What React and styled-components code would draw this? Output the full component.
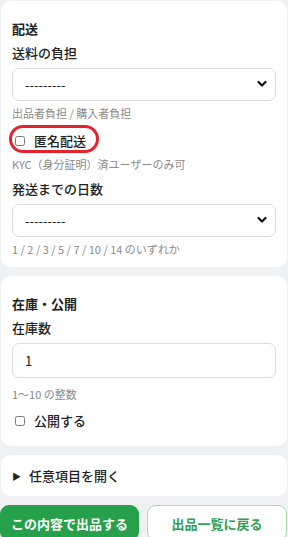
import React from 'react'
import styled, { createGlobalStyle } from 'styled-components'

const GlobalStyle = createGlobalStyle`
  html, body {
    margin: 0;
    padding: 0;
    background: #f0f1f3;
    font-family: "Noto Sans CJK JP", "Noto Sans", sans-serif;
    color: #222;
  }
`

const Page = styled.div`
  display: flex;
  flex-direction: column;
  gap: 9px;
  padding: 1px 1px 0 1px;
`

const Card = styled.section`
  background: #fff;
  border-radius: 10px;
  padding: ${p => p.$pad || '18px 11px 10px 11px'};
  display: flex;
  flex-direction: column;
`

const Heading = styled.h2`
  margin: 0;
  font-size: 13px;
  line-height: 20px;
  font-weight: 600;
`

const Label = styled.div`
  margin-top: ${p => p.$top || '4px'};
  font-size: 13px;
  line-height: 20px;
  font-weight: 500;
`

const SelectWrap = styled.div`
  position: relative;
  margin-top: 5px;
`

const Select = styled.select`
  appearance: none;
  width: 100%;
  height: 33px;
  box-sizing: border-box;
  border: 1px solid #dcdcdc;
  border-radius: 7px;
  background: #fff;
  padding: 0 12px;
  font-family: inherit;
  font-size: 13px;
  color: #222;
`

const Chevron = styled.svg`
  position: absolute;
  right: 9px;
  top: 12px;
  width: 10px;
  height: 8px;
  pointer-events: none;
`

const Input = styled.input`
  margin-top: 5px;
  width: 100%;
  height: 35px;
  box-sizing: border-box;
  border: 1px solid #dcdcdc;
  border-radius: 7px;
  padding: 0 12px;
  font-family: inherit;
  font-size: 13px;
  color: #222;
`

const Hint = styled.div`
  margin-top: ${p => p.$top || '5px'};
  font-size: 11px;
  line-height: 16px;
  color: #8a8a8a;
`

const CheckRow = styled.label`
  position: relative;
  margin-top: ${p => p.$top || '7px'};
  display: flex;
  align-items: center;
  gap: 9px;
  padding-left: 3px;
  font-size: 13px;
  line-height: 20px;
  font-weight: 500;
`

const Box = styled.input`
  margin: 0;
  width: 10px;
  height: 10px;
`

const Circle = styled.span`
  position: absolute;
  left: -3px;
  top: -6px;
  width: 84px;
  height: 22px;
  border: 3px solid #e3242f;
  border-radius: 16px;
  pointer-events: none;
`

const Summary = styled.div`
  display: flex;
  align-items: center;
  gap: 8px;
  font-size: 13px;
  font-weight: 500;
  line-height: 20px;
`

const Tri = styled.span`
  font-size: 9px;
  line-height: 1;
`

const Actions = styled.div`
  display: grid;
  grid-template-columns: 139px 1fr;
  gap: 8px;
  margin: 0 0 0 -1px;
`

const Button = styled.button`
  height: 36px;
  border-radius: 9px;
  font-family: inherit;
  font-size: 13px;
  font-weight: 700;
  border: 1px solid ${p => (p.$outline ? '#a9dab6' : '#26a04b')};
  background: ${p => (p.$outline ? '#fff' : '#26a04b')};
  color: ${p => (p.$outline ? '#2f9e52' : '#fff')};
`

const Arrow = () => (
  <Chevron viewBox="0 0 10 8">
    <path d="M1.5 2 L5 5.5 L8.5 2" fill="none" stroke="#111" strokeWidth="2.2" strokeLinecap="round" strokeLinejoin="round" />
  </Chevron>
)

export default function App() {
  return (
    <Page>
      <GlobalStyle />
      <Card>
        <Heading>配送</Heading>
        <Label>送料の負担</Label>
        <SelectWrap>
          <Select defaultValue="">
            <option value="">---------</option>
          </Select>
          <Arrow />
        </SelectWrap>
        <Hint $top="4px">出品者負担 / 購入者負担</Hint>
        <CheckRow $top="10px">
          <Box type="checkbox" />
          <span>匿名配送</span>
          <Circle />
        </CheckRow>
        <Hint $top="5px">KYC（身分証明）済ユーザーのみ可</Hint>
        <Label $top="7px">発送までの日数</Label>
        <SelectWrap>
          <Select defaultValue="">
            <option value="">---------</option>
          </Select>
          <Arrow />
        </SelectWrap>
        <Hint $top="4px">1 / 2 / 3 / 5 / 7 / 10 / 14 のいずれか</Hint>
      </Card>
      <Card $pad="18px 11px 15px 11px">
        <Heading>在庫・公開</Heading>
        <Label>在庫数</Label>
        <Input defaultValue="1" />
        <Hint $top="8px">1〜10 の整数</Hint>
        <CheckRow $top="9px">
          <Box type="checkbox" />
          <span>公開する</span>
        </CheckRow>
      </Card>
      <Card $pad="11px 11px 10px 11px">
        <Summary>
          <Tri>▶</Tri>
          <span>任意項目を開く</span>
        </Summary>
      </Card>
      <Actions>
        <Button>この内容で出品する</Button>
        <Button $outline>出品一覧に戻る</Button>
      </Actions>
    </Page>
  )
}
